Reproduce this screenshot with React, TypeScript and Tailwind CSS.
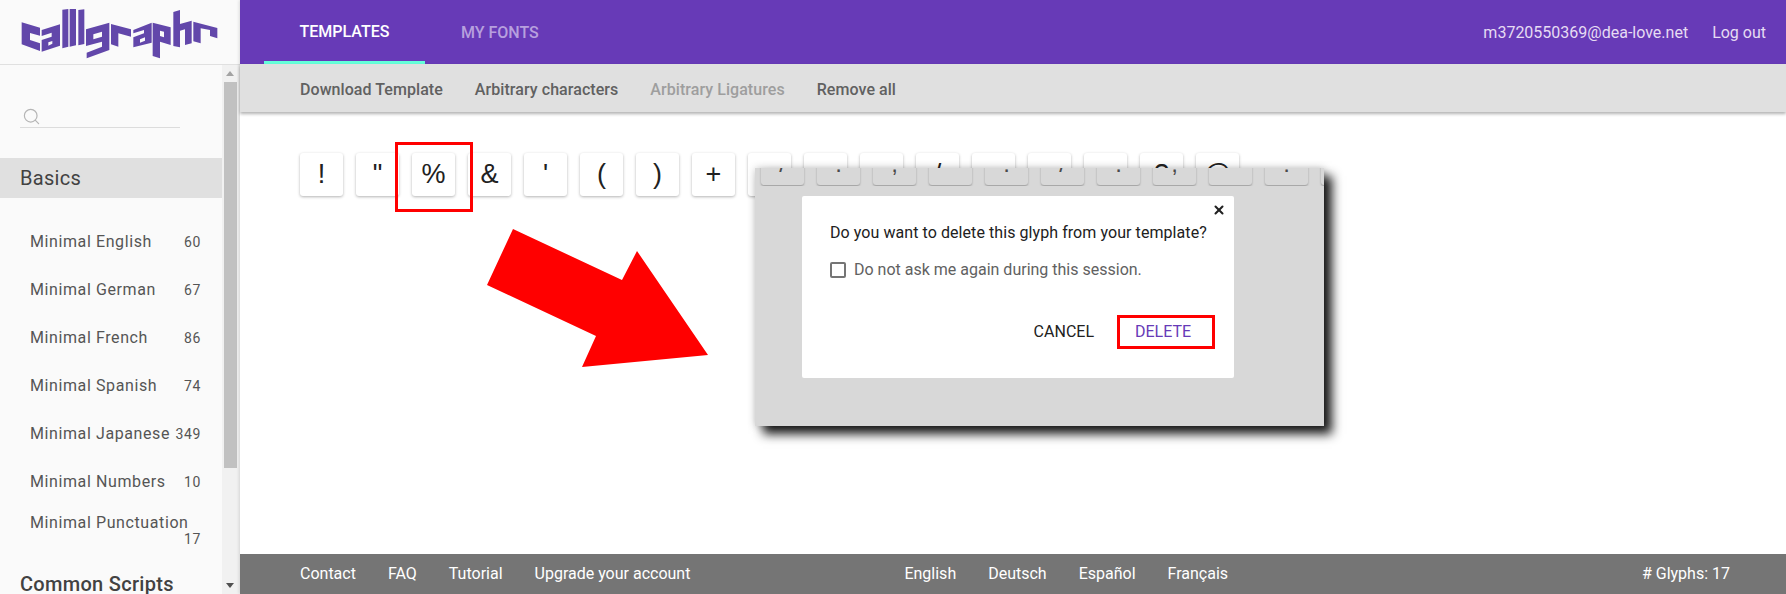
import React from "react";
import { Search, X } from "lucide-react";

const sidebarItems = [
  { name: "Minimal English", count: 60 },
  { name: "Minimal German", count: 67 },
  { name: "Minimal French", count: 86 },
  { name: "Minimal Spanish", count: 74 },
  { name: "Minimal Japanese", count: 349 },
  { name: "Minimal Numbers", count: 10 },
];

const topGlyphs = ["!", '"', "%", "&", "'", "(", ")", "+", ",", "-", ".", "/", ":", ";", "=", "?", "@"];
const coveredGlyphs = ["/", ".", ",", "", ".", "/", ".", ",", "", ":", ""];

function Logo() {
  return (
    <svg width="220" height="66" viewBox="0 0 660 198" className="block" fill="#6247aa">
      {/* c */}
      <path d="M35 67 L90 83 L90 107 L60 99 L60 120 L90 130 L90 153 L35 133 Z" />
      {/* a */}
      <path fillRule="evenodd" d="M95 90 L150 73 L150 137 L95 155 L95 120 L125 110 L125 98 L95 108 Z M115 127 L127 123 L127 131 L115 137 Z" />
      {/* l l */}
      <path d="M157 29 L175 27 L175 140 L157 145 Z" />
      <path d="M179 27 L198 27 L198 136 L179 140 Z" />
      {/* i */}
      <path d="M205 30 L223 28 L223 132 L205 136 Z" />
      {/* g */}
      <path fillRule="evenodd" d="M228 88 L298 68 L298 150 L230 175 L230 158 L276 140 L276 125 L228 138 Z M250 103 L276 95 L276 110 L250 118 Z" />
      {/* r */}
      <path d="M303 72 L363 88 L363 110 L325 100 L325 140 L303 133 Z" />
      {/* a */}
      <path fillRule="evenodd" d="M370 90 L425 68 L425 128 L370 142 L370 112 L402 100 L402 90 L370 100 Z M390 118 L405 112 L405 122 L390 128 Z" />
      {/* p */}
      <path fillRule="evenodd" d="M428 68 L482 82 L482 135 L450 125 L450 175 L428 168 Z M450 92 L462 95 L462 112 L450 108 Z" />
      {/* h */}
      <path d="M490 36 L510 30 L510 72 L545 62 L545 130 L525 135 L525 88 L510 92 L510 142 L490 138 Z" />
      {/* r */}
      <path d="M550 65 L622 84 L622 115 L600 108 L600 90 L572 85 L572 130 L550 124 Z" />
    </svg>
  );
}

function Sidebar() {
  return (
    <aside className="flex h-full w-[240px] shrink-0 flex-col">
      <div className="flex h-[65px] shrink-0 border-b border-[#e0e0e0] bg-[#fafafa] pl-[10px]">
        <Logo />
      </div>
      <div className="flex min-h-0 flex-1">
        <div className="min-w-0 flex-1 overflow-hidden bg-[#fafafa]">
          <div className="mx-5 mt-[42px] flex h-[21px] w-[160px] items-start border-b border-[#dcdcdc] pl-[2px]">
            <Search size={19} strokeWidth={1.5} className="text-[#b5b5b5]" />
          </div>
          <div className="mt-[30px] flex h-10 items-center bg-[#e0e0e0] pl-5 text-[20px] tracking-[0.3px] text-[#424242]">
            Basics
          </div>
          <div className="mt-[20px]">
            {sidebarItems.map((item) => (
              <div key={item.name} className="flex h-12 items-center justify-between pl-[30px] pr-[21px] text-[16px] tracking-[0.6px] text-[#555]">
                <span>{item.name}</span>
                <span className="text-[14px]">{item.count}</span>
              </div>
            ))}
            <div className="pl-[30px] pr-[21px] pt-[9px] text-[16px] leading-[16px] tracking-[0.6px] text-[#555]">
              <div>Minimal Punctuation</div>
              <div className="text-right text-[14px]">17</div>
            </div>
          </div>
          <div className="mt-[22px] pl-5 text-[20px] font-medium tracking-[0.3px] text-[#424242]">Common Scripts</div>
        </div>
        <div className="flex w-[18px] shrink-0 flex-col items-center bg-[#f1f1f1] pr-[2px]">
          <svg width="10" height="17" viewBox="0 0 10 17" fill="#a3a3a3">
            <polygon points="5,6 9,11 1,11" />
          </svg>
          <div className="h-[386px] w-[13px] bg-[#c1c1c1]" />
          <div className="flex-1" />
          <svg width="10" height="17" viewBox="0 0 10 17" fill="#505050">
            <polygon points="1,6 9,6 5,11" />
          </svg>
        </div>
      </div>
    </aside>
  );
}

function GlyphButton({ glyph }: { glyph: string }) {
  return (
    <div className="flex h-[43px] w-[43px] shrink-0 items-center justify-center rounded-[3px] bg-white font-[Liberation_Sans,sans-serif] text-[27px] text-[#212121] shadow-[0_1px_3px_rgba(0,0,0,0.3)]">
      {glyph}
    </div>
  );
}

function DeleteDialog() {
  return (
    <div className="absolute left-[515px] top-[56px] h-[258px] w-[569px] bg-[#d8d8d8] shadow-[8px_8px_10px_rgba(0,0,0,0.9),0_0_8px_rgba(0,0,0,0.2)]">
      <div className="flex h-[18px] gap-[13px] overflow-hidden pl-[6px]">
        {coveredGlyphs.map((glyph, i) => (
          <div
            key={i}
            className="-mt-[25px] flex h-[42px] w-[43px] shrink-0 items-center justify-center rounded-[3px] bg-[#d8d8d8] font-[Liberation_Sans,sans-serif] text-[24px] text-[#4a4a4a] shadow-[0_1px_2px_rgba(0,0,0,0.3)]"
          >
            {glyph}
          </div>
        ))}
      </div>
      <div className="relative ml-[47px] mt-[10px] h-[182px] w-[432px] rounded-[2px] bg-white px-7 pt-[26px]">
        <X size={14} strokeWidth={3.5} className="absolute right-[8px] top-[7px] text-[#212121]" />
        <p className="whitespace-nowrap text-[16px] leading-[22px] tracking-[0.07px] text-[#212121]">Do you want to delete this glyph from your template?</p>
        <label className="mt-[15px] flex items-center gap-2 text-[16px] leading-[22px] text-[#616161]">
          <span className="h-4 w-4 rounded-[2px] border-2 border-[#757575]" />
          Do not ask me again during this session.
        </label>
        <div className="-mr-[9px] mt-[34px] flex items-center justify-end">
          <span className="text-[16px] text-[#212121]">CANCEL</span>
          <span className="ml-[23px] flex h-[34px] w-[98px] items-center border-[3px] border-[#ff0000] pl-[15px] text-[16px] text-[#673ab7]">DELETE</span>
        </div>
      </div>
    </div>
  );
}

export default function App() {
  return (
    <div className="flex h-screen w-full overflow-hidden bg-white font-[Roboto,sans-serif]">
      <Sidebar />
      <div className="flex min-w-0 flex-1 flex-col shadow-[-1px_0_3px_rgba(0,0,0,0.12)]">
        <header className="flex h-16 shrink-0 items-stretch justify-between bg-[#673ab7] text-[16px]">
          <nav className="flex items-stretch pl-6">
            <div className="flex w-[161px] items-center justify-center border-b-[3px] border-[#64ffda] pt-[3px] font-medium text-white">TEMPLATES</div>
            <div className="flex items-center pt-[1px] pl-9 font-medium text-[#b7a0de]">MY FONTS</div>
          </nav>
          <div className="flex items-center gap-6 pt-[1px] pr-5 text-[#e6dcf3]">
            <span>m3720550369@dea-love.net</span>
            <span>Log out</span>
          </div>
        </header>
        <div className="z-10 flex h-12 shrink-0 items-center gap-8 bg-[#e0e0e0] pl-[60px] pt-[3px] text-[16px] font-medium tracking-[0.06px] text-[#616161] shadow-[0_2px_3px_rgba(0,0,0,0.3)]">
          <span>Download Template</span>
          <span>Arbitrary characters</span>
          <span className="text-[#9e9e9e]">Arbitrary Ligatures</span>
          <span>Remove all</span>
        </div>
        <main className="relative min-h-0 flex-1">
          <div className="flex gap-[13px] pl-[60px] pt-[41px]">
            {topGlyphs.map((glyph, i) => (
              <GlyphButton key={i} glyph={glyph} />
            ))}
          </div>
          <div className="absolute left-[155px] top-[30px] h-[70px] w-[78px] border-[3px] border-[#ff0000]" />
          <svg className="absolute left-[247px] top-[117px]" width="221" height="138" viewBox="0 0 221 138" fill="#ff0000">
            <polygon points="26,0 135,51 150,22 221,126 95,138 109,107 0,56" />
          </svg>
          <DeleteDialog />
        </main>
        <footer className="flex h-10 shrink-0 items-center bg-[#757575] pl-[60px] pr-[56px] text-[16px] text-white">
          <div className="flex gap-8">
            <span>Contact</span>
            <span>FAQ</span>
            <span>Tutorial</span>
            <span>Upgrade your account</span>
          </div>
          <div className="ml-[214px] flex gap-8">
            <span>English</span>
            <span>Deutsch</span>
            <span>Español</span>
            <span>Français</span>
          </div>
          <span className="ml-auto"># Glyphs: 17</span>
        </footer>
      </div>
    </div>
  );
}
